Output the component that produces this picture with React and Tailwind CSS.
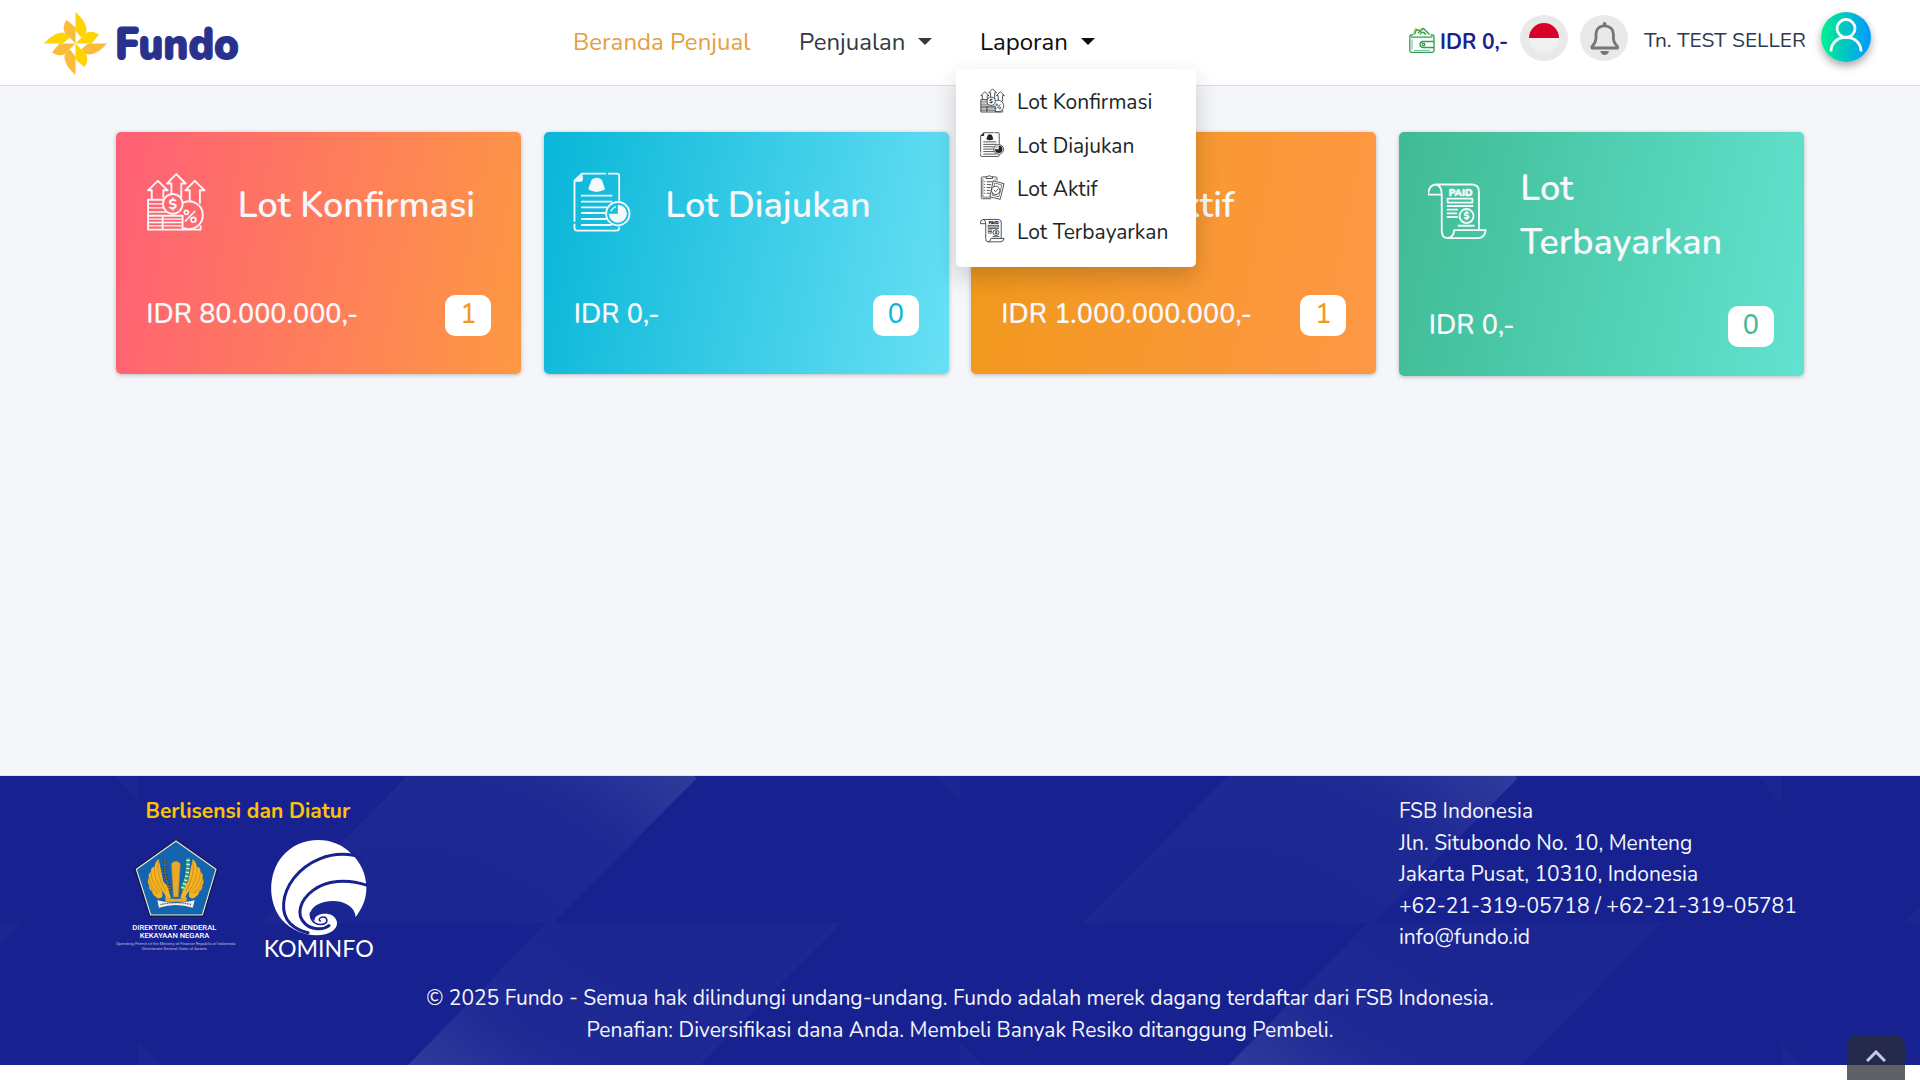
import React from "react";

function FundoMark() {
  const big = "M136 38C153 53 169 72 169 94C168 102 163 107 157 112L152 113L136 94Z";
  const small = "M110 62C99 75 98 92 106 102L136 132V84Z";
  const petals = [
    [0, "#ffd400", "#fdbb3a"],
    [90, "#fdbb3a", "#ffd400"],
    [180, "#fdbb3a", "#ffd400"],
    [270, "#ffd400", "#fdbb3a"],
  ];
  return (
    <svg viewBox="42 38 188 188" className="h-[63px] w-[63px]">
      {petals.map(([a, c1, c2]) => (
        <g key={a} transform={`rotate(${a} 136 132)`}>
          <path d={big} fill={c1} />
          <path d={small} fill={c2} />
        </g>
      ))}
    </svg>
  );
}

function KonfirmasiIcon({ className }) {
  return (
    <svg viewBox="137 157 177 175" className={className} fill="none" stroke="currentColor" strokeWidth="5.500" strokeLinejoin="round">
      <path d="M212 220V190H199L226 162L254 190H241V232M154 238V210H143L172 182L201 210H188V232M266 242V210H253L281 182L310 210H296V250" />
      <path d="M190 238H143V326H245V285H143M186 285V326" />
      <path d="M143 250H186M143 262H188M143 274H196M143 295H245M143 305H245M143 315H245" strokeWidth="4" />
      <circle cx="216" cy="250" r="29" />
      <path d="M245 247A41 41 0 1 1 247 321M245 326H298V314" />
      <text x="216" y="265" textAnchor="middle" fontSize="42" fontWeight="800" fontFamily="Nunito, Lato, sans-serif" fill="currentColor" stroke="none">$</text>
      <g strokeWidth="5">
        <path d="M282 271L252 302" />
        <circle cx="256" cy="275" r="6" />
        <circle cx="277" cy="297" r="7" />
      </g>
    </svg>
  );
}

function DiajukanIcon({ className }) {
  return (
    <svg viewBox="104 154 175 180" className={className} fill="none" stroke="currentColor" strokeWidth="5.500" strokeLinejoin="round">
      <path d="M106 303V180L128 159H200M206 159H234Q240 159 240 165V240M240 318V322Q240 330 232 330H114Q106 330 106 322V309" />
      <path d="M106 183L131 160V178Q130 183 124 183Z" fill="currentColor" stroke="none" />
      <path d="M157 178Q172 164 188 178L198 206Q172 222 147 206Z" fill="currentColor" stroke="none" />
      <path d="M128 225H217M128 243H217M128 260H202M128 277H197M128 295H200M128 313H216" strokeLinecap="round" />
      <circle cx="236" cy="279" r="35" />
      <path d="M236 279V252A27 27 0 1 1 209 279Z" fill="currentColor" stroke="none" />
      <path d="M215 272Q219 262 230 258" strokeWidth="4" />
    </svg>
  );
}

function AktifIcon({ className }) {
  return (
    <svg viewBox="58 163 76 78" className={className} fill="none" stroke="currentColor" strokeWidth="2.4" strokeLinejoin="round">
      <path d="M76 169H65Q61 169 61 173V233Q61 237 65 237H92M96 169H106Q110 169 110 173V180" />
      <path d="M76 174V168H80Q86 162 92 168H96V174Z" />
      <path d="M66 174V232H90M104 174V180" strokeWidth="1.8" />
      <path d="M78 184H96M78 193H92M78 202H90M78 211H88M78 220H88" />
      <path d="M70 184H73M70 193H73M70 202H73M70 211H73M70 220H73" />
      <path d="M98 181L132 190L120 239L88 231Z" />
      <path d="M103 188L125 194L116 231L95 226Z" strokeWidth="1.8" />
      <circle cx="106" cy="211" r="13" fill="white" />
      <path d="M100 209L105 215L114 206" />
    </svg>
  );
}

function TerbayarkanIcon({ className }) {
  return (
    <svg viewBox="116 188 179 172" className={className} fill="none" stroke="currentColor" strokeWidth="5.500" strokeLinejoin="round">
      <path d="M140 195H248Q268 196 268 216V331M140 195Q117 197 117 225H157Q157 199 140 195M157 225V332Q157 355 175 355Q193 352 194 331H288Q286 354 264 355H175" />
      <text x="178" y="229" textLength="71" lengthAdjust="spacingAndGlyphs" fontSize="29" fontWeight="900" fontFamily="Nunito, Lato, sans-serif" fill="currentColor" stroke="currentColor" strokeWidth="1.5">PAID</text>
      <rect x="174.500" y="237" width="74" height="12" />
      <path d="M172 259H251M172 270H205M172 281H203M172 292H205M205 318H255" />
      <circle cx="231" cy="289" r="21" />
      <text x="231" y="299" textAnchor="middle" fontSize="27" fontWeight="900" fontFamily="Nunito, Lato, sans-serif" fill="currentColor" stroke="currentColor" strokeWidth="1">$</text>
    </svg>
  );
}

function WalletIcon() {
  return (
    <svg viewBox="0 0 26 26" className="h-[26px] w-[26px]" fill="none" strokeLinejoin="round">
      <g stroke="#c9b53c" strokeWidth="1">
        <path d="M4.500 7.500L6 1.500L17 7.500M9 3L14 1L20 6.500" />
      </g>
      <g stroke="#2f9e4f" strokeWidth="1.300">
        <path d="M5.500 7.500L7.500 2.500L11 4.500M11 7.500Q12 4.500 15 5.500L17 7.500M9 6L14.500 1.500L20.500 7.500" />
        <path d="M4 8H2.500Q.8 8 .8 10V23.500Q.8 25.300 2.600 25.300H23.300Q25 25.300 25 23.500V20.500M25 14.500V10Q25 8 23.300 8H21.500" />
        <path d="M2 10.200H23.500M25 14.500H14Q11 14.800 11 17.500Q11 20.300 14 20.500H25V14.500" />
        <circle cx="14.500" cy="17.500" r="1.300" />
      </g>
      <path d="M3 12.500V22.500M5 23.400H21" stroke="#74b9a5" strokeWidth="1" />
    </svg>
  );
}

function BellIcon() {
  return (
    <svg viewBox="0 0 30 34" className="mt-px ml-px h-[34px] w-[30px]" fill="none">
      <path d="M14.500 3.800C9 3.800 6 7.500 6 12V16Q6 20.500 2 24.500V26H27.500V24.500Q23.400 20.500 23.400 16V12C23.400 7.500 20 3.800 14.500 3.800Z" stroke="#767676" strokeWidth="2.800" strokeLinejoin="round" />
      <circle cx="14.600" cy="1.900" r="1.900" fill="#767676" />
      <path d="M10.300 29H19Q18 33 14.600 33Q11.200 33 10.300 29Z" fill="#767676" />
    </svg>
  );
}

function Caret() {
  return <span className="mt-[-2px] inline-block border-x-[7px] border-t-[7px] border-x-transparent border-t-current" />;
}

function TreasuryLogo() {
  const wing = "M213 354Q204 332 206 322L190 306L176 238Q166 246 163 262Q152 262 153 276Q143 282 147 294Q140 304 147 316Q145 328 155 334Q158 346 168 352Q178 362 188 350L186 334Q196 342 200 358Z";
  const feathers = "M176 242Q166 280 196 334M163 262Q160 300 190 338M153 276Q152 308 182 338M147 294Q150 322 176 340M147 316Q154 334 172 342";
  return (
    <svg viewBox="45 175 365 345" className="h-[115px] w-[121.700px] overflow-visible">
      <path d="M228 181L351 268L309 409H150L105 268Z" fill="#1565ae" stroke="#15183f" strokeWidth="6" strokeLinejoin="round" />
      <path d="M228 184L348 269L307 406H152L109 269Z" fill="none" stroke="#e4e6ea" strokeWidth="3.500" />
      <g>
        <path d={wing} fill="#f6b221" />
        <path d={feathers} fill="none" stroke="#9a7424" strokeWidth="1.500" />
      </g>
      <g transform="matrix(-1 0 0 1 454 0)">
        <path d={wing} fill="#f6b221" />
        <path d={feathers} fill="none" stroke="#9a7424" strokeWidth="1.500" />
      </g>
      <path d="M214 252Q227 238 241 252L235 352H220Z" fill="#e9a92a" stroke="#a77a20" strokeWidth="1.500" />
      <path d="M195 240Q190 290 212 332" stroke="#3d3a3a" strokeWidth="9" strokeDasharray="5 3" fill="none" />
      <path d="M195 240Q190 290 212 332" stroke="#c99a2c" strokeWidth="4" strokeDasharray="3 5" fill="none" />
      <path d="M264 236Q266 290 246 330" stroke="#2aa66a" strokeWidth="11" fill="none" />
      <path d="M264 240Q266 290 246 330" stroke="#e8f4ee" strokeWidth="10" strokeDasharray="4 8" fill="none" />
      <path d="M196 352Q228 364 260 352V366H196Z" fill="#e9a92a" />
      <path d="M172 362Q227 378 284 362L278 384Q227 368 177 384Z" fill="#f2f2f2" />
      <path d="M181 375Q227 363 275 375" stroke="#555" strokeWidth="4" strokeDasharray="3 2" fill="none" />
      <g fill="#fff" fontFamily="Roboto, sans-serif">
        <text x="97" y="450" fontSize="24" fontWeight="500" textLength="252" lengthAdjust="spacingAndGlyphs">DIREKTORAT JENDERAL</text>
        <text x="119" y="476" fontSize="24" fontWeight="500" textLength="209" lengthAdjust="spacingAndGlyphs">KEKAYAAN NEGARA</text>
        <g opacity=".65">
          <text x="48" y="496" fontSize="12" textLength="358" lengthAdjust="spacingAndGlyphs">Operating Permit of the Ministry of Finance Republic of Indonesia</text>
          <text x="126" y="511" fontSize="12" textLength="195" lengthAdjust="spacingAndGlyphs">Directorate General State of Assets</text>
        </g>
      </g>
    </svg>
  );
}

function KominfoLogo() {
  return (
    <svg viewBox="490 175 335 365" className="h-[121.700px] w-[111.700px] overflow-visible">
      <path fill="#fff" d="M768 412C784 390 801 362 800 322C799 285 785 250 755 222C700 165 600 168 548 230C502 285 505 372 548 422C575 452 615 466 650 467C690 467 714 450 712 428C708 408 692 401 672 402C655 403 643 412 645 424C632 418 629 408 632 398C640 376 668 364 700 364C735 364 766 382 768 412Z" />
      <g fill="none" stroke="#172290" strokeLinecap="round">
        <path d="M762 227C690 214 622 245 582 296C545 345 542 402 572 432C590 449 608 456 625 459" strokeWidth="9" />
        <path d="M758 224L790 240" strokeWidth="8" />
        <path d="M803 317C740 296 680 302 640 332C600 362 588 405 616 432C632 448 668 454 688 438" strokeWidth="9" />
        <path d="M632 400C630 428 655 440 675 432C686 426 683 410 668 412C658 414 656 422 662 424" strokeWidth="4.500" />
      </g>
      <text x="492" y="532" fontSize="69" fill="#fff" fontWeight="400" fontFamily="Lato, sans-serif" textLength="330" lengthAdjust="spacingAndGlyphs">KOMINFO</text>
    </svg>
  );
}

function FooterPattern() {
  return (
    <svg className="absolute inset-0 h-full w-full" viewBox="0 776 1920 289" preserveAspectRatio="none">
      <defs>
        <radialGradient id="upper" gradientUnits="userSpaceOnUse" cx="400" cy="1090" r="440">
          <stop offset=".3" stopColor="#fff" stopOpacity=".012" />
          <stop offset=".75" stopColor="#fff" stopOpacity=".035" />
          <stop offset="1" stopColor="#fff" stopOpacity=".12" />
        </radialGradient>
        <radialGradient id="lower" gradientUnits="userSpaceOnUse" cx="700" cy="765" r="430">
          <stop offset=".3" stopColor="#fff" stopOpacity=".012" />
          <stop offset=".75" stopColor="#fff" stopOpacity=".035" />
          <stop offset="1" stopColor="#fff" stopOpacity=".12" />
        </radialGradient>
      </defs>
      {[-821, 0, 821, 1642].map((dx) => (
        <g key={dx} transform={`translate(${dx} 0)`}>
          <path d="M407 776H693Q698 777 695 780L553 923H262Z" fill="url(#upper)" />
          <path d="M547 923H841L700 1065H408Z" fill="url(#lower)" />
          <path d="M115 776H139V802ZM139 1043L161 1065H139Z" fill="#fff" fillOpacity=".02" />
        </g>
      ))}
    </svg>
  );
}

const menu = [
  ["Lot Konfirmasi", KonfirmasiIcon],
  ["Lot Diajukan", DiajukanIcon],
  ["Lot Aktif", AktifIcon],
  ["Lot Terbayarkan", TerbayarkanIcon],
];

const cards = [
  { title: "Lot Konfirmasi", amount: "IDR 80.000.000,-", count: 1, Icon: KonfirmasiIcon, bg: "bg-[linear-gradient(101deg,#ff5f76,#fd9942)]", fg: "text-[#f2991c]" },
  { title: "Lot Diajukan", amount: "IDR 0,-", count: 0, Icon: DiajukanIcon, bg: "bg-[linear-gradient(101deg,#08b6d8,#68e0f4)]", fg: "text-[#0ab7d8]" },
  { title: "Lot Aktif", amount: "IDR 1.000.000.000,-", count: 1, Icon: AktifIcon, bg: "bg-[linear-gradient(101deg,#f0991a,#ff9746)]", fg: "text-[#f2991c]" },
  { title: "Lot Terbayarkan", amount: "IDR 0,-", count: 0, Icon: TerbayarkanIcon, bg: "bg-[linear-gradient(101deg,#3fba93,#62e3d0)]", fg: "text-[#3fba93]", tall: true },
];

function Card({ title, amount, count, Icon, bg, fg, tall }) {
  return (
    <div className={`rounded-[5px] px-[30px] pt-[30px] text-[#f7f8fb] shadow-[0_1px_4px_rgba(0,0,0,0.25)] ${bg} ${tall ? "h-[244px]" : "h-[242px]"}`}>
      <div className={`flex items-center ${tall ? "h-[107px]" : "h-[87px]"}`}>
        <Icon className={`ml-[-0.500px] h-[60px] w-[60px] shrink-0 ${tall ? "mb-[10px]" : "mb-[8px]"}`} />
        <h2 className="ml-[32px] text-[36px] leading-[54px] font-semibold">{title}</h2>
      </div>
      <div className={`flex items-start justify-between text-[27px] ${tall ? "mt-[37px]" : "mt-[46px]"}`}>
        <span className="leading-[40px] font-semibold">{amount}</span>
        <span className={`h-[41px] w-[46px] rounded-[10px] bg-white text-center leading-[39px] font-medium ${fg}`}>{count}</span>
      </div>
    </div>
  );
}

export default function App() {
  return (
    <div className="relative flex h-[1080px] w-[1920px] flex-col overflow-hidden bg-white font-[Nunito,Lato,sans-serif] text-[21px] leading-[31.5px]">
      <header className="flex h-[86px] shrink-0 items-start border-b border-[#dcdfe6] bg-white">
        <div className="ml-[44px] flex w-[529px] pt-[12px]">
          <FundoMark />
          <svg viewBox="0 0 126 46" className="mt-[4px] ml-[8px] h-[46px] w-[126px] overflow-visible">
            <text x="0" y="43" textLength="124" lengthAdjust="spacingAndGlyphs" fontSize="45" fontWeight="900" fontFamily="Nunito, Lato, sans-serif" fill="#2a318d" stroke="#2a318d" strokeWidth="1">Fundo</text>
          </svg>
        </div>
        <nav className="flex pt-[24px] text-[24px] leading-[36px] text-[#343a40]">
          <a className="w-[226px] tracking-[0.050px] text-[#e3a03f]">Beranda Penjual</a>
          <div className="flex w-[181px] items-center gap-[13px]">Penjualan<Caret /></div>
          <div className="relative">
            <div className="flex items-center gap-[13px] text-[#0c0d0e]">Laporan<Caret /></div>
            <div className="absolute top-[45px] left-[-24px] z-10 h-[198px] w-[240px] rounded-[5px] bg-white py-[11.500px] text-[21px] text-[#212529] shadow-[0_10px_24px_rgba(0,0,0,0.18)]">
              {menu.map(([label, Icon]) => (
                <div key={label} className="flex h-[43.400px] items-center gap-[12px] pl-[24px]">
                  <Icon className="mt-[-3px] h-[25px] w-[25px]" />
                  <span>{label}</span>
                </div>
              ))}
            </div>
          </div>
        </nav>
        <div className="mr-[49px] ml-auto flex">
          <div className="flex pt-[27px]">
            <WalletIcon />
            <span className="ml-[5px] w-[80px] text-[21px] leading-[30px] font-bold text-[#17238f]">IDR 0,-</span>
          </div>
          <div className="mt-[15px] flex h-[46px] w-[48px] items-center justify-center rounded-[50%] bg-[#e9e9e9]">
            <div className="h-[30px] w-[30px] rounded-full bg-[linear-gradient(#d80027_50%,#f0f0f0_50%)]" />
          </div>
          <div className="mt-[15px] ml-[12px] flex h-[46px] w-[48px] items-center justify-center rounded-[50%] bg-[#e9e9e9]">
            <BellIcon />
          </div>
          <span className="mt-[24.500px] ml-[16px] w-[177px] text-[20.900px] whitespace-nowrap text-[#2b3a4c]">Tn. TEST SELLER</span>
          <div className="mt-[12px] flex h-[50px] w-[50px] justify-center rounded-full bg-[linear-gradient(90deg,#00f38d,#0098ff)] shadow-[0_4px_8px_rgba(0,0,0,0.35)]">
            <svg viewBox="0 0 50 50" className="h-[50px] w-[50px]" fill="none" stroke="#fff" strokeWidth="2.800">
              <circle cx="25" cy="16.500" r="9" />
              <path d="M10 39.500C10 20.500 40 20.500 40 39.500" strokeLinecap="butt" />
            </svg>
          </div>
        </div>
      </header>

      <main className="h-[690px] shrink-0 border-b border-[#dfe5ea] bg-[#f4f6fa] pt-[46px]">
        <div className="mx-auto grid w-[1687.500px] grid-cols-4 items-start gap-[22.500px]">
          {cards.map((c) => (
            <Card key={c.title} {...c} />
          ))}
        </div>
      </main>

      <footer className="relative h-[289px] shrink-0 bg-[#172290] text-[#f4f5fa]">
        <FooterPattern />
        <div className="relative flex h-[207px] justify-between pt-[20px]">
          <div className="ml-[115px]">
            <h3 className="ml-[30.500px] font-bold text-[#ffc107]">Berlisensi dan Diatur</h3>
            <div className="mt-[10.500px] flex gap-[26px]">
              <TreasuryLogo />
              <KominfoLogo />
            </div>
          </div>
          <address className="w-[521px] not-italic">
            <p>FSB Indonesia</p>
            <p>Jln. Situbondo No. 10, Menteng</p>
            <p>Jakarta Pusat, 10310, Indonesia</p>
            <p>+62-21-319-05718 / +62-21-319-05781</p>
            <p>info@fundo.id</p>
          </address>
        </div>
        <div className="relative text-center">
          <p>© 2025 Fundo - Semua hak dilindungi undang-undang. Fundo adalah merek dagang terdaftar dari FSB Indonesia.</p>
          <p>Penafian: Diversifikasi dana Anda. Membeli Banyak Resiko ditanggung Pembeli.</p>
        </div>
      </footer>

      <button className="absolute right-[15px] bottom-0 flex h-[45px] w-[58px] justify-center rounded-t-[10px] bg-[rgba(42,44,54,0.75)] pt-[15px]">
        <svg viewBox="0 0 20 12" className="h-[12px] w-[20px]" fill="none" stroke="#c5c9e6" strokeWidth="3">
          <path d="M1 11L10 2L19 11" />
        </svg>
      </button>
    </div>
  );
}
